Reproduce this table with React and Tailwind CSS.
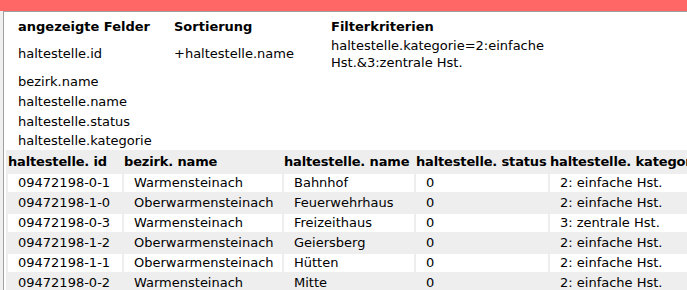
const fields = [
  "bezirk.name",
  "haltestelle.name",
  "haltestelle.status",
  "haltestelle.kategorie",
];

const columns = [
  { label: "haltestelle. id", w: "w-[114px]" },
  { label: "bezirk. name", w: "w-[158px]" },
  { label: "haltestelle. name", w: "w-[130px]" },
  { label: "haltestelle. status", w: "w-[132px]" },
  { label: "haltestelle. kategorie", w: "w-[150px]" },
];

const rows = [
  ["09472198-0-1", "Warmensteinach", "Bahnhof", "0", "2: einfache Hst."],
  ["09472198-1-0", "Oberwarmensteinach", "Feuerwehrhaus", "0", "2: einfache Hst."],
  ["09472198-0-3", "Warmensteinach", "Freizeithaus", "0", "3: zentrale Hst."],
  ["09472198-1-2", "Oberwarmensteinach", "Geiersberg", "0", "2: einfache Hst."],
  ["09472198-1-1", "Oberwarmensteinach", "Hütten", "0", "2: einfache Hst."],
  ["09472198-0-2", "Warmensteinach", "Mitte", "0", "2: einfache Hst."],
];

const App = () => {
  return (
    <div
      className="h-screen w-full overflow-hidden bg-[#f0f0f0] text-[13px] text-black"
      style={{ fontFamily: '"DejaVu Sans", Verdana, sans-serif' }}
    >
      <div className="h-[11px] bg-[#ff6666]" />
      <div className="ml-[3px] h-full border-l border-t border-[#a0a0a0] bg-white">
        {/* query summary */}
        <div className="grid grid-cols-[156px_157px_225px] grid-rows-[20px_35px_20px_20px_20px_19px] items-center pl-[14px] pt-[4px] leading-[17px]">
          <div className="font-bold">angezeigte Felder</div>
          <div className="font-bold">Sortierung</div>
          <div className="font-bold">Filterkriterien</div>

          <div>haltestelle.id</div>
          <div>+haltestelle.name</div>
          <div>haltestelle.kategorie=2:einfache Hst.&amp;3:zentrale Hst.</div>

          {fields.map((f) => (
            <div key={f} className="col-start-1">
              {f}
            </div>
          ))}
        </div>

        {/* result table */}
        <table className="ml-[2px] w-[696px] min-w-[696px] table-fixed border-separate border-spacing-[2px] bg-[#eeeeee] whitespace-nowrap">
          <colgroup>
            {columns.map((c) => (
              <col key={c.label} className={c.w} />
            ))}
          </colgroup>
          <thead>
            <tr>
              {columns.map((c) => (
                <th
                  key={c.label}
                  className="h-[20px] overflow-hidden p-0 text-left font-bold leading-[20px] tracking-[-0.15px]"
                >
                  {c.label}
                </th>
              ))}
            </tr>
          </thead>
          <tbody>
            {rows.map((r, i) => (
              <tr key={r[0]} className={i % 2 === 0 ? "bg-white" : "bg-[#eeeeee]"}>
                {r.map((v, j) => (
                  <td key={j} className="h-[18px] overflow-hidden px-[10px] py-0 leading-[18px]">
                    {v}
                  </td>
                ))}
              </tr>
            ))}
          </tbody>
        </table>
      </div>
    </div>
  );
};

export default App;
